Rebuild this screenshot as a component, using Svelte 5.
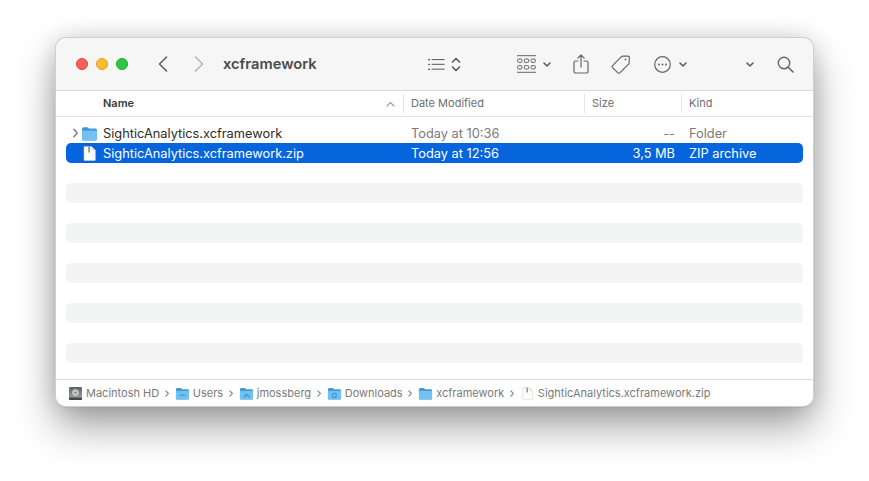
<script>
  const rows = [
    { name: 'SighticAnalytics.xcframework', date: 'Today at 10:36', size: '--', kind: 'Folder', type: 'folder' },
    { name: 'SighticAnalytics.xcframework.zip', date: 'Today at 12:56', size: '3,5 MB', kind: 'ZIP archive', type: 'file', selected: true }
  ];
  const fillers = [0, 1, 2, 3, 4, 5, 6, 7, 8, 9, 10];
  const crumbs = [
    { label: 'Macintosh HD', icon: 'disk' },
    { label: 'Users', icon: 'folder', mark: 'users' },
    { label: 'jmossberg', icon: 'folder', mark: 'home' },
    { label: 'Downloads', icon: 'folder', mark: 'down' },
    { label: 'xcframework', icon: 'folder' },
    { label: 'SighticAnalytics.xcframework.zip', icon: 'file' }
  ];
</script>

{#snippet folder(size, mark)}
  <svg class="crumb-icon" width={size} height={size} viewBox="0 0 16 16">
    <path d="M1 3.6C1 2.7 1.6 2 2.5 2h3.2c.6 0 .9.2 1.2.6l.6.8h6c.9 0 1.5.6 1.5 1.5V13c0 .9-.6 1.5-1.5 1.5h-11C1.6 14.5 1 13.9 1 13z" fill="#3f9bd8"/>
    <path d="M1 5.4h14V13c0 .9-.6 1.5-1.5 1.5h-11C1.6 14.5 1 13.9 1 13z" fill="#74c1f1"/>
    {#if mark === 'users'}
      <circle cx="8" cy="9.6" r="1.4" fill="#4a9dd6"/>
      <circle cx="5" cy="10" r=".9" fill="#4a9dd6"/>
      <circle cx="11" cy="10" r=".9" fill="#4a9dd6"/>
    {:else if mark === 'home'}
      <path d="M5 10.4l3-2.6 3 2.6v1.8H9.2v-1.4H6.8v1.4H5z" fill="#4a9dd6"/>
    {:else if mark === 'down'}
      <circle cx="8" cy="10" r="3" fill="#4a9dd6"/>
      <path d="M8 8.3v2.6M6.9 10l1.1 1.1L9.1 10" stroke="#a5d9f7" stroke-width=".8" fill="none"/>
    {/if}
  </svg>
{/snippet}

{#snippet zipfile(size)}
  <svg class="crumb-icon" width={size} height={size} viewBox="0 0 16 16">
    <path d="M3 1.5h7L13.5 5v9c0 .4-.2.6-.6.6H3.4c-.3 0-.6-.2-.6-.6V2c0-.3.1-.5.2-.5z" fill="#fbfbfb" stroke="#d2d2d2" stroke-width=".5"/>
    <path d="M10 1.5L13.5 5H10z" fill="#dcdcdc"/>
    <path d="M7 1.5h1.2v5.5H7z" fill="#6f6f6f"/>
  </svg>
{/snippet}

{#snippet chevronDown()}
  <svg width="10" height="7" viewBox="0 0 10 7"><path d="M2 2l3 3 3-3" fill="none" stroke="#5a5a5a" stroke-width="1.5" stroke-linecap="round" stroke-linejoin="round"/></svg>
{/snippet}

<div class="page">
  <div class="window">
    <header class="toolbar">
      <div class="lights">
        <span class="light red"></span>
        <span class="light yellow"></span>
        <span class="light green"></span>
      </div>
      <svg class="nav back" width="10" height="16" viewBox="0 0 10 16"><path d="M8.5 1L1.5 8l7 7" fill="none" stroke="#5c5c5c" stroke-width="1.5" stroke-linecap="round" stroke-linejoin="round"/></svg>
      <svg class="nav forward" width="10" height="16" viewBox="0 0 10 16"><path d="M1.5 1l7 7-7 7" fill="none" stroke="#b4b4b4" stroke-width="1.5" stroke-linecap="round" stroke-linejoin="round"/></svg>
      <h1 class="title">xcframework</h1>

      <svg class="tool list" width="17" height="13" viewBox="0 0 17 13">
        <g fill="#666"><rect x="0" y="1" width="2" height="1.3"/><rect x="0" y="5.8" width="2" height="1.3"/><rect x="0" y="10.6" width="2" height="1.3"/></g>
        <g fill="#666"><rect x="3.6" y="1" width="13" height="1.1"/><rect x="3.6" y="5.8" width="13" height="1.1"/><rect x="3.6" y="10.6" width="13" height="1.1"/></g>
      </svg>
      <svg class="tool updown" width="10" height="15" viewBox="0 0 10 15"><path d="M1.5 5L5 1.5 8.5 5M1.5 10L5 13.5 8.5 10" fill="none" stroke="#555" stroke-width="1.5" stroke-linecap="round" stroke-linejoin="round"/></svg>

      <svg class="tool grid" width="19" height="18" viewBox="0 0 19 18">
        <g fill="none" stroke="#666" stroke-width="1">
          <path d="M0 .7h19M0 17.3h19" />
          <rect x=".7" y="4" width="4.2" height="3.4" rx=".7"/><rect x="7.4" y="4" width="4.2" height="3.4" rx=".7"/><rect x="14.1" y="4" width="4.2" height="3.4" rx=".7"/>
          <rect x=".7" y="10.6" width="4.2" height="3.4" rx=".7"/><rect x="7.4" y="10.6" width="4.2" height="3.4" rx=".7"/><rect x="14.1" y="10.6" width="4.2" height="3.4" rx=".7"/>
        </g>
      </svg>
      <span class="tool grid-chev">{@render chevronDown()}</span>

      <svg class="tool share" width="16" height="20" viewBox="0 0 16 20">
        <path d="M5 7H2.6C1.6 7 1 7.6 1 8.6v8.8c0 1 .6 1.6 1.6 1.6h10.8c1 0 1.6-.6 1.6-1.6V8.6c0-1-.6-1.6-1.6-1.6H11M8 13V1.2M4.8 4.2L8 1l3.2 3.2" fill="none" stroke="#666" stroke-width="1.2" stroke-linecap="round" stroke-linejoin="round"/>
      </svg>

      <svg class="tool tag" width="20" height="20" viewBox="0 0 20 20">
        <path d="M1.6 11.6l8.6-8.8c.4-.4.8-.6 1.4-.6l5.2-.2c1 0 1.7.7 1.6 1.7l-.3 5.2c0 .5-.3 1-.6 1.3l-8.6 8.6c-.6.6-1.4.6-2 0l-5.3-5.2c-.6-.6-.6-1.4 0-2z" fill="none" stroke="#666" stroke-width="1.2"/>
        <circle cx="14.5" cy="5.4" r=".9" fill="#666"/>
      </svg>

      <svg class="tool more" width="17" height="17" viewBox="0 0 17 17">
        <circle cx="8.5" cy="8.5" r="7.8" fill="none" stroke="#666" stroke-width="1.2"/>
        <g fill="#666"><circle cx="5" cy="8.5" r="1"/><circle cx="8.5" cy="8.5" r="1"/><circle cx="12" cy="8.5" r="1"/></g>
      </svg>
      <span class="tool more-chev">{@render chevronDown()}</span>

      <span class="tool end-chev">{@render chevronDown()}</span>
      <svg class="tool search" width="17" height="17" viewBox="0 0 17 17">
        <circle cx="7" cy="7" r="5.7" fill="none" stroke="#666" stroke-width="1.4"/>
        <path d="M11.2 11.2L16 16" stroke="#666" stroke-width="1.6" stroke-linecap="round"/>
      </svg>
    </header>

    <div class="columns">
      <div class="col name-col">
        Name
        <svg class="sort" width="9" height="6" viewBox="0 0 9 6"><path d="M1 5l3.5-3.5L8 5" fill="none" stroke="#9a9a9a" stroke-width="1.1" stroke-linecap="round"/></svg>
      </div>
      <div class="col date-col">Date Modified</div>
      <div class="col size-col">Size</div>
      <div class="col kind-col">Kind</div>
    </div>

    <main class="list-area">
      {#each rows as row}
        <div class="row" class:selected={row.selected}>
          <div class="disclosure">
            {#if row.type === 'folder'}
              <svg width="7" height="10" viewBox="0 0 7 10"><path d="M1.8 1.3L5.3 5 1.8 8.7" fill="none" stroke="#777" stroke-width="1.3" stroke-linecap="round" stroke-linejoin="round"/></svg>
            {/if}
          </div>
          <div class="row-icon">
            {#if row.type === 'folder'}
              {@render folder(17)}
            {:else}
              {@render zipfile(17)}
            {/if}
          </div>
          <div class="row-name">{row.name}</div>
          <div class="row-date">{row.date}</div>
          <div class="row-size">{row.size}</div>
          <div class="row-kind">{row.kind}</div>
        </div>
      {/each}
      {#each fillers as i}
        <div class="row" class:stripe={i % 2 === 1}></div>
      {/each}
    </main>

    <footer class="pathbar">
      {#each crumbs as crumb, i}
        <div class="crumb">
          {#if crumb.icon === 'folder'}
            {@render folder(15, crumb.mark)}
          {:else if crumb.icon === 'file'}
            {@render zipfile(15)}
          {:else}
            <svg class="crumb-icon" width="15" height="15" viewBox="0 0 15 15">
              <defs>
                <linearGradient id="disk" x1="0" y1="0" x2="0" y2="1">
                  <stop offset="0" stop-color="#5f6265"/>
                  <stop offset="1" stop-color="#a9acaf"/>
                </linearGradient>
              </defs>
              <rect x="1" y="1" width="13" height="13" rx="1.4" fill="url(#disk)"/>
              <rect x="1" y="11.4" width="13" height="2.6" rx=".8" fill="#44474a"/>
              <circle cx="7.5" cy="6.6" r="3.4" fill="#c3c5c7"/>
              <circle cx="7.5" cy="6.6" r=".9" fill="#6c6f72"/>
            </svg>
          {/if}
          <span>{crumb.label}</span>
        </div>
        {#if i < crumbs.length - 1}
          <svg class="sep" width="6" height="9" viewBox="0 0 6 9"><path d="M1.8 1.8L4.4 4.5 1.8 7.2" fill="none" stroke="#858585" stroke-width="1.1" stroke-linecap="round" stroke-linejoin="round"/></svg>
        {/if}
      {/each}
    </footer>
  </div>
</div>

<style>
  :global(body) {
    margin: 0;
    background: #fff;
    font-family: Inter, "Liberation Sans", sans-serif;
  }

  .page {
    height: 481px;
    box-sizing: border-box;
    padding: 38px 0 0 56px;
    overflow: hidden;
  }

  .window {
    width: 757px;
    height: 368px;
    box-sizing: border-box;
    display: flex;
    flex-direction: column;
    background: #fff;
    border-radius: 10px;
    overflow: hidden;
    box-shadow: 0 0 0 1px #cfcfcf, 0 1px 1px rgba(0, 0, 0, 0.35), 0 20px 40px rgba(0, 0, 0, 0.38), 0 0 22px rgba(0, 0, 0, 0.14);
  }

  .toolbar {
    height: 53px;
    flex: none;
    display: flex;
    align-items: center;
    box-sizing: border-box;
    background: #f6f6f6;
    border-bottom: 1px solid #dcdcdc;
    padding-left: 20px;
  }

  .lights { display: flex; gap: 8px; }
  .light { width: 12px; height: 12px; border-radius: 50%; box-sizing: border-box; }
  .red { background: #fb5f57; border: 1px solid #e0443e; }
  .yellow { background: #fcbc2f; border: 1px solid #dea123; }
  .green { background: #29c840; border: 1px solid #1aab29; }

  .nav { flex: none; }
  .back { margin-left: 30px; }
  .forward { margin-left: 26px; }

  .title {
    margin: 0 0 0 19px;
    width: 111px;
    flex: none;
    font-size: 14.7px;
    font-weight: 600;
    color: #4a4a4a;
    white-space: nowrap;
  }

  .tool { flex: none; display: flex; }
  .list { margin-left: 94px; }
  .updown { margin-left: 6px; }
  .grid { margin-left: 56px; }
  .grid-chev { margin-left: 6px; }
  .share { margin-left: 21px; }
  .tag { margin-left: 22px; }
  .more { margin-left: 23px; }
  .more-chev { margin-left: 7px; }
  .end-chev { margin-left: 57px; }
  .search { margin-left: 22px; }

  .columns {
    height: 26px;
    flex: none;
    display: grid;
    grid-template-columns: 347px 181px 97px 1fr;
    align-items: center;
    box-sizing: border-box;
    border-bottom: 1px solid #e4e4e4;
    font-size: 11px;
    color: #6e6e6e;
  }

  .col {
    height: 19px;
    line-height: 19px;
    box-sizing: border-box;
    padding-left: 7px;
    border-left: 1px solid #e4e4e4;
    white-space: nowrap;
  }

  .name-col {
    position: relative;
    border-left: 0;
    padding-left: 47px;
    font-weight: 600;
    color: #3a3a3a;
  }

  .sort { position: absolute; right: 8px; top: 7px; }

  .list-area {
    flex: 1;
    padding: 6px 10px 0;
    overflow: hidden;
    font-size: 12.8px;
    color: #2c2c2c;
  }

  .row {
    height: 20px;
    display: grid;
    grid-template-columns: 15px 22px 308px 150px 128px 1fr;
    align-items: center;
    border-radius: 5px;
    white-space: nowrap;
  }

  .stripe { background: #f3f4f4; }

  .selected { background: #0665dc; color: #fff; }

  .disclosure { display: flex; justify-content: flex-end; padding-right: 2px; }
  .row-icon { display: flex; }
  .row-date { color: #7a7a7a; }
  .row-size { color: #7a7a7a; text-align: right; padding-right: 14px; }
  .row-kind { color: #7a7a7a; }
  .selected .row-date, .selected .row-size, .selected .row-kind { color: #fff; }

  .pathbar {
    height: 27px;
    flex: none;
    display: flex;
    align-items: center;
    box-sizing: border-box;
    background: #fff;
    border-top: 1px solid #dcdcdc;
    padding-left: 12px;
    font-size: 11px;
    color: #7a7a7a;
    white-space: nowrap;
  }

  .crumb { display: flex; align-items: center; gap: 3px; }
  .crumb-icon { flex: none; display: block; }
  .sep { margin: 0 4.8px; flex: none; }
</style>
